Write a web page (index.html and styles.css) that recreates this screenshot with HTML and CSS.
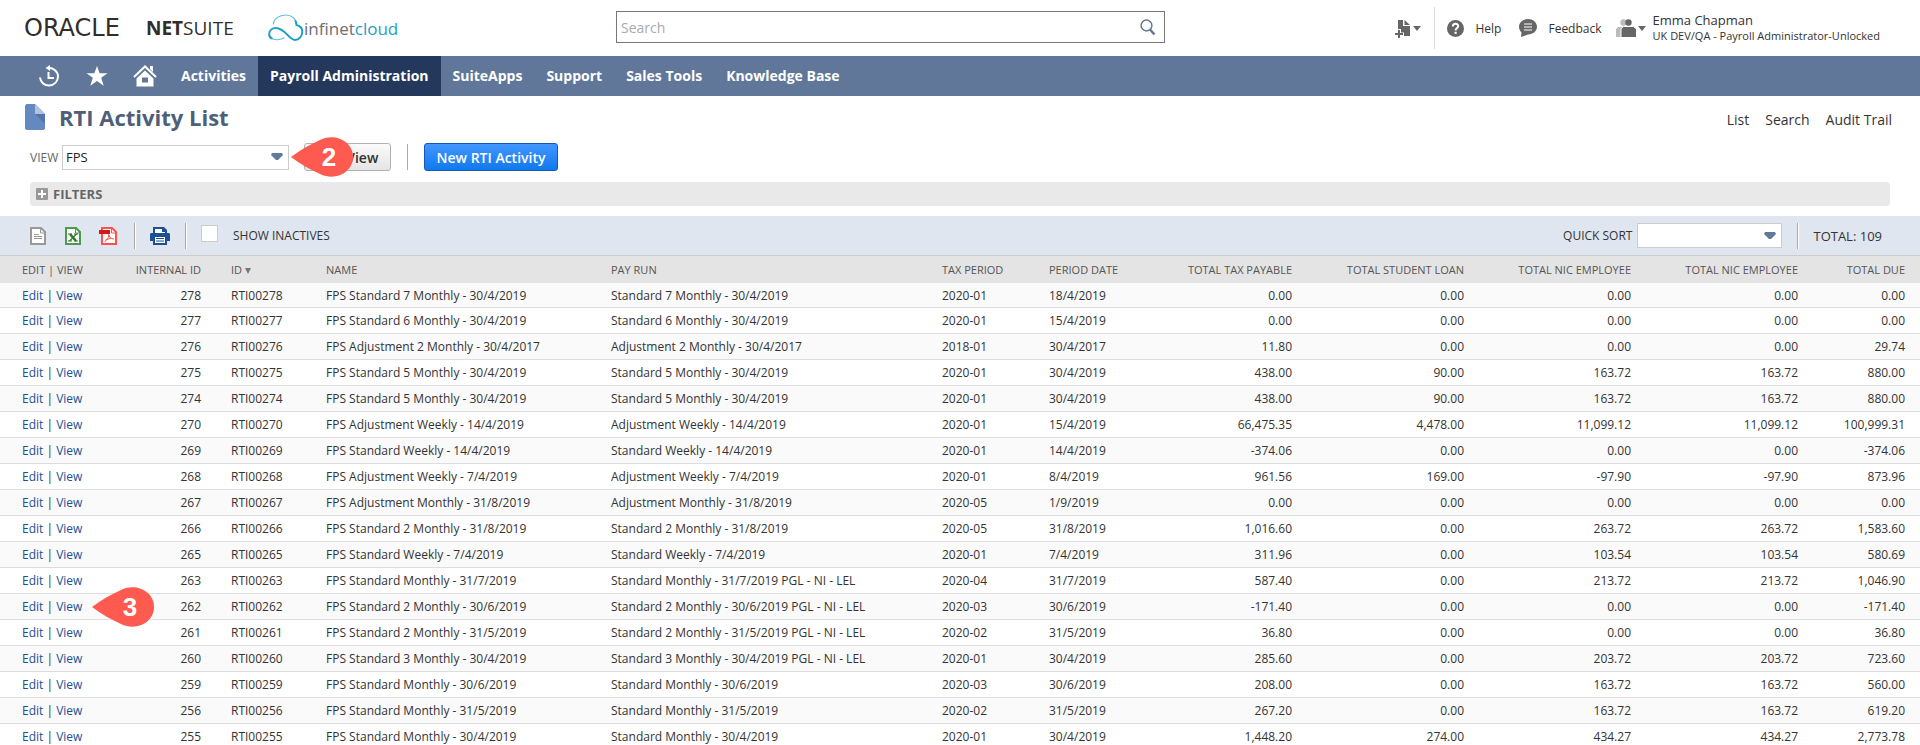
FILE: index.html
```
<!DOCTYPE html>
<html lang="en">
<head>
  <meta charset="UTF-8" />
  <meta name="viewport" content="width=device-width, initial-scale=1.0"/>
  <title>RTI Activity List</title>
<link rel="stylesheet" href="styles.css">
</head>
<body>
  <header class="header">
    <div class="logos">
      <a href="#" class="logo-netsuite"><span class="oracle">ORACLE</span><span class="netsuite"><b>NET</b>SUITE</span></a>
      <a href="#" class="logo-infinet">
        <svg width="36" height="28" viewBox="0 0 36 28" fill="none" stroke-linecap="round">
          <path stroke="#5fc0dc" stroke-width="1.200" d="M5.500 10C5.500 5 11 1 18 1C23.500 1 28 4.500 28.500 10"/>
          <path stroke="#1e9fc6" stroke-width="2" d="M27.500 7C28.300 8.500 28.500 10 28.500 11C32.500 12 34.500 14.500 34.300 18C34 22.500 31 26 27 26C21 26 17 14 8 14C4 14 1.200 16.500 1.200 20C1.200 22 2.500 24 4 24.500"/>
          <path stroke="#5fc0dc" stroke-width="1.200" d="M4 24.500C8 26.500 13 25.500 16 24"/>
        </svg>
        <span class="infinet">infinet<span>cloud</span></span>
      </a>
    </div>
    <form class="search">
      <input type="text" placeholder="Search" aria-label="Search">
      <button type="submit" aria-label="Run search">
        <svg width="16" height="17" viewBox="0 0 16 17" fill="none" stroke="#5f7795"><circle cx="6.500" cy="6.500" r="5.400" stroke-width="1.500"/><path d="M10 10.500l4.500 5" stroke-width="2.400"/></svg>
      </button>
    </form>
    <div class="tools">
      <button class="tool new" aria-label="Create new">
        <svg width="16" height="19" viewBox="0 0 16 19" fill="#666"><path d="M3 1h5v6h7v10H9v-3.500H6V10H3z"/><path d="M9.500 1L15 6H9.500z"/><path d="M3 11h2v3h3v2H5v3H3v-3H0v-2h3z"/></svg>
        <i class="caret"></i>
      </button>
      <a href="#" class="tool help">
        <svg width="17" height="17" viewBox="0 0 17 17"><circle cx="8.500" cy="8.500" r="8.500" fill="#666"/><path d="M5.800 6.500C5.800 3 11.200 3 11.200 6.200C11.200 8 8.600 8.200 8.600 10.500" fill="none" stroke="#fff" stroke-width="2"/><path d="M7.500 11.800h2.200v2H7.500z" fill="#fff"/></svg>
        <span>Help</span>
      </a>
      <a href="#" class="tool feedback">
        <svg width="18" height="18" viewBox="0 0 18 18"><path fill="#666" d="M9 0c5 0 9 3.400 9 7.800s-4 7.700-9 7.700L2 18l.5-4.500C.8 11.800 0 10 0 7.800C0 3.400 4 0 9 0z"/><path d="M5 5h8M5 8h8M5 11h8" stroke="#fff" stroke-width="1.200"/></svg>
        <span>Feedback</span>
      </a>
      <button class="tool role">
        <svg width="20" height="18" viewBox="0 0 20 18"><g fill="#bbb"><circle cx="7.500" cy="3.500" r="3.200"/><path d="M0 18v-8l2-2h5v10z"/></g><path fill="#666" stroke="#fff" d="M5 19V9.500L7.500 7.500h10L20.500 10v9z"/><circle cx="12.500" cy="3.500" r="3.200" fill="#666"/></svg>
        <i class="caret"></i>
        <span class="user">Emma Chapman<small>UK DEV/QA - Payroll Administrator-Unlocked</small></span>
      </button>
    </div>
  </header>

  <nav class="nav">
    <a href="#" class="nav-icon" aria-label="Recent records">
      <svg width="22" height="22" viewBox="0 0 22 22" fill="none" stroke="#fff" stroke-width="2"><path d="M10 3C15.500 2.500 20 6.500 20 11.500C20 16.500 16 20.500 11 20.500C6 20.500 2.500 17 2 12.500"/><path d="M10.500 7v6H16"/><path d="M12 0v6L7.500 3z" fill="#fff" stroke="none"/></svg>
    </a>
    <a href="#" class="nav-icon" aria-label="Shortcuts">
      <svg width="22" height="22" viewBox="0 0 22 22" fill="#fff"><path d="M11 1l2.600 7.200H21.500l-6.300 4.600 2.500 7.900L11 16 4.300 20.700 6.800 12.800.5 8.200h7.900z"/></svg>
    </a>
    <a href="#" class="nav-icon" aria-label="Home">
      <svg width="24" height="22" viewBox="0 0 24 22" fill="#fff"><path d="M1 12L12 1.500 23 12" fill="none" stroke="#fff" stroke-width="2"/><path d="M17 1h3v6l-3-3z"/><path fill-rule="evenodd" d="M12 5.500l8.500 8V21.500h-17v-8zM9 12.500v5h6v-5z"/></svg>
    </a>
    <a href="#">Activities</a>
    <a href="#" class="active">Payroll Administration</a>
    <a href="#">SuiteApps</a>
    <a href="#">Support</a>
    <a href="#">Sales Tools</a>
    <a href="#">Knowledge Base</a>
  </nav>

  <main>
    <div class="title">
      <svg width="20" height="26" viewBox="0 0 20 26"><path fill="#6488c0" d="M1.500 0H10l10 10v14.500L18.500 26h-17L0 24.500v-23z"/><path fill="#b0c2e0" d="M10 0l10 10H10z"/><path fill="#5375aa" d="M10 10h10v9.500z"/></svg>
      <h1>RTI Activity List</h1>
      <div class="title-links">
        <a href="#">List</a>
        <a href="#">Search</a>
        <a href="#">Audit Trail</a>
      </div>
    </div>

    <div class="view-bar">
      <label for="view">VIEW</label>
      <select id="view"><option>FPS</option></select>
      <div class="edit-view">
        <button class="btn">Edit View</button>
        <svg class="marker" width="62" height="40" viewBox="0 0 62 40"><path fill="#ff5a4f" d="M0 20C9 13 20 7 30 2.500C45-4 62 5 62 20S45 44 30 37.500C20 33 9 27 0 20z"/><text x="38" y="29">2</text></svg>
      </div>
      <span class="separator"></span>
      <button class="btn primary">New RTI Activity</button>
    </div>

    <button class="filters">
      <svg width="12" height="12" viewBox="0 0 12 12"><rect width="12" height="12" rx="1" fill="#999"/><path d="M6 2v8M2 6h8" stroke="#fff" stroke-width="2"/></svg>
      FILTERS
    </button>

    <div class="toolbar">
      <button class="export" aria-label="Export CSV">
        <svg width="18" height="18" viewBox="0 0 18 18" fill="none" stroke="#999"><path stroke-width="2" fill="#fff" d="M2 1h10l4 4v12H2z"/><path d="M11.500 1v5H16" /><path d="M5 7.500h5M5 9.500h8M5 11.500h8"/></svg>
      </button>
      <button class="export" aria-label="Export Excel">
        <svg width="18" height="18" viewBox="0 0 18 18" fill="none" stroke="#4c9a4c"><path stroke-width="2" fill="#fff" d="M2 1h10l4 4v12H2z"/><path d="M11.500 1v5H16"/><path stroke="#2d7a2d" stroke-width="2.600" d="M6 7l6 7"/><path stroke="#2d7a2d" stroke-width="1.200" d="M12.500 7l-7 7M4 7h4M10 7h4M4 14h4M10 14h4"/></svg>
      </button>
      <button class="export" aria-label="Export PDF">
        <svg width="19" height="18" viewBox="1 0 19 18" fill="none" stroke="#ff5050"><path stroke-width="2" fill="#fff" d="M4 1h10l4 4v12H4z"/><path d="M13.500 1v5H18"/><path d="M1 3h11v4H1z" fill="#d91515" stroke="none"/><path d="M10.500 7c1 3 2 5 5.500 5M10.800 8c0 3-2 5.500-4.300 6.500M7.500 13c2-1 4-1.500 6-1.500"/></svg>
      </button>
      <span class="separator"></span>
      <button class="export" aria-label="Print">
        <svg width="20" height="18" viewBox="0 0 20 18"><path fill="#1c4f94" d="M3 0h11l3 3v3h2l1 1v7h-3v4H3v-4H0V7l1-1h2z"/><path fill="#fff" d="M5 2h7v3h3v1H5zM5 10h10v6H5z"/><path d="M6 11.500h8M6 14h8" stroke="#1c4f94"/></svg>
      </button>
      <span class="separator"></span>
      <input type="checkbox" id="inactives">
      <label for="inactives">SHOW INACTIVES</label>
      <label for="sort" class="sort-label">QUICK SORT</label>
      <select id="sort"><option></option></select>
      <span class="separator"></span>
      <span class="total">TOTAL: 109</span>
    </div>

    <table class="list">
      <colgroup>
        <col class="c-edit"><col class="c-internal"><col class="c-id"><col class="c-name"><col class="c-run"><col class="c-period"><col class="c-date"><col class="c-tax"><col class="c-loan"><col class="c-nic"><col class="c-nic"><col class="c-due">
      </colgroup>
      <thead>
        <tr>
          <th>EDIT | VIEW</th>
          <th class="num">INTERNAL ID</th>
          <th>ID <i class="sorted"></i></th>
          <th>NAME</th>
          <th>PAY RUN</th>
          <th>TAX PERIOD</th>
          <th>PERIOD DATE</th>
          <th class="num">TOTAL TAX PAYABLE</th>
          <th class="num">TOTAL STUDENT LOAN</th>
          <th class="num">TOTAL NIC EMPLOYEE</th>
          <th class="num">TOTAL NIC EMPLOYEE</th>
          <th class="num">TOTAL DUE</th>
        </tr>
      </thead>
      <tbody id="rows"></tbody>
    </table>
  </main>

  <script src="list.js"></script>
</body>
</html>
```

FILE: styles.css
```
* {
  box-sizing: border-box;
}

body {
  margin: 0;
  font-family: "Open Sans", sans-serif;
  font-size: 12px;
  color: #333;
  background-color: #fff;
  overflow: hidden;
}

a {
  color: inherit;
  text-decoration: none;
}

button, input, select {
  font-family: inherit;
  margin: 0;
}

button {
  padding: 0;
  border: none;
  background: none;
  color: inherit;
  cursor: pointer;
}

svg {
  display: block;
  flex: none;
}

/* header */
.header {
  display: flex;
  align-items: center;
  height: 56px;
  padding: 0 24px;
}

.logos {
  display: flex;
  align-items: center;
  width: 592px;
}

.logo-netsuite {
  display: flex;
  align-items: center;
  width: 244px;
  color: #312d2a;
  line-height: 28px;
}

.oracle {
  width: 122px;
  font-family: "DejaVu Sans", sans-serif;
  font-size: 24px;
}

.netsuite {
  font-size: 19px;
}

.logo-infinet {
  display: flex;
  align-items: center;
}

.infinet {
  font-size: 17px;
  font-weight: 500;
  color: #6d6e71;
}

.infinet span {
  color: #1e9fc6;
}

.search {
  display: flex;
  align-items: center;
  width: 549px;
  height: 32px;
  border: 1px solid #777;
  margin-bottom: 2px;
}

.search input {
  flex: 1;
  border: none;
  outline: none;
  font-size: 14px;
  padding: 0 4px;
}

.search input::placeholder {
  color: #aaa;
}

.search button {
  padding: 0 8px;
}

.tools {
  display: flex;
  align-items: center;
  margin-left: auto;
  margin-right: 16px;
}

.tool {
  display: flex;
  align-items: center;
  font-size: 12px;
}

.caret {
  border: 4px solid transparent;
  border-top: 5px solid #666;
  border-bottom: none;
  margin-left: 2px;
}

.new {
  height: 42px;
  padding-right: 13px;
  border-right: 1px solid #ddd;
}

.help {
  margin-left: 12px;
  gap: 11px;
}

.feedback {
  margin-left: 18px;
  gap: 11px;
}

.role {
  margin-left: 14px;
  text-align: left;
}

.user {
  margin-left: 7px;
  font-size: 13px;
  line-height: 16px;
}

.user small {
  display: block;
  font-size: 11px;
}

/* navigation */
.nav {
  display: flex;
  height: 40px;
  padding-left: 25px;
  background-color: #607799;
  color: #fff;
}

.nav a {
  display: flex;
  align-items: center;
  padding: 0 12px 2px;
  font-size: 14px;
  font-weight: bold;
}

.nav .nav-icon {
  width: 48px;
  padding: 0;
  justify-content: center;
}

.nav .active {
  background-color: #24385b;
}

/* title */
.title {
  display: flex;
  align-items: center;
  height: 42px;
  padding: 0 28px 0 25px;
}

.title h1 {
  margin: 0 0 0 14px;
  font-size: 22px;
  color: #4d5f79;
}

.title-links {
  display: flex;
  gap: 16px;
  margin-left: auto;
  padding-top: 4px;
  font-size: 14px;
}

.view-bar {
  display: flex;
  align-items: center;
  height: 38px;
  padding-left: 30px;
  font-size: 12px;
}

.view-bar label {
  width: 32px;
  color: #666;
}

select {
  appearance: none;
  height: 25px;
  border: 1px solid #ccc;
  border-radius: 0;
  padding: 0 3px;
  color: #222;
  font-size: 13px;
  background: #fff url("data:image/svg+xml,%3Csvg xmlns='http://www.w3.org/2000/svg' width='12' height='8'%3E%3Cpath fill='%235f7a9c' d='M1 0h10l1 2-5 5H5L0 2z'/%3E%3C/svg%3E") no-repeat right 5px center;
}

#view {
  width: 227px;
}

.edit-view {
  position: relative;
  margin-left: 15px;
}

.btn {
  height: 28px;
  width: 87px;
  border: 1px solid #b2b2b2;
  border-radius: 3px;
  background: linear-gradient(#fafafa, #e5e5e5);
  font-size: 14px;
  font-weight: 600;
}

.btn.primary {
  width: 134px;
  border-color: #125ab2;
  background: linear-gradient(#4297ff, #1078ee);
  color: #fff;
}

.marker {
  position: absolute;
  left: -13px;
  top: -6px;
}

.marker text {
  fill: #fff;
  font: bold 26px "Liberation Sans", sans-serif;
  text-anchor: middle;
}

.separator {
  width: 2px;
  height: 26px;
  border-left: 1px solid #aaa;
  border-right: 1px solid #fff;
}

.view-bar .separator {
  margin: 0 15px 0 16px;
}

.filters {
  display: flex;
  align-items: center;
  gap: 5px;
  width: calc(100% - 60px);
  height: 24px;
  margin: 6px 30px 10px;
  padding: 0 6px;
  border-radius: 4px;
  background-color: #e9e9e9;
  color: #666;
  font-size: 13px;
  font-weight: bold;
}

/* list toolbar */
.toolbar {
  display: flex;
  align-items: center;
  height: 40px;
  padding: 0 38px 0 29px;
  border-bottom: 1px solid #ccc;
  background-color: #e0e6ef;
  font-size: 12px;
}

.export {
  width: 35px;
}

.toolbar .separator {
  margin-right: 14px;
}

.toolbar input {
  appearance: none;
  width: 17px;
  height: 17px;
  margin-right: 15px;
  margin-bottom: 4px;
  border: 1px solid #ccc;
  background-color: #fff;
}

.sort-label {
  margin-left: auto;
  margin-right: 5px;
}

#sort {
  width: 145px;
  margin-right: 15px;
}

.total {
  font-size: 13px;
}

/* list */
.list {
  width: 100%;
  table-layout: fixed;
  border-collapse: separate;
  border-spacing: 0;
}

.c-edit { width: 120px; }
.c-internal { width: 96px; }
.c-id { width: 95px; }
.c-name { width: 285px; }
.c-run { width: 331px; }
.c-period { width: 107px; }
.c-date { width: 107px; }
.c-tax { width: 166px; }
.c-loan { width: 172px; }
.c-nic { width: 167px; }
.c-due { width: 107px; }

.list th, .list td {
  height: 26px;
  padding: 0 15px;
  text-align: left;
  white-space: nowrap;
}

.list th {
  height: 27px;
  font-size: 11px;
  font-weight: normal;
  color: #555;
  background-color: #e4e4e4;
}

.list td {
  position: relative;
  border-bottom: 1px solid #ddd;
  font-size: 12px;
}

.list tbody tr:first-child td {
  height: 25px;
}

.list th:first-child, .list td:first-child {
  padding-left: 22px;
}

.list tbody tr:nth-child(odd) {
  background-color: #fafafa;
}

.list .num {
  text-align: right;
}

.list td a {
  color: #1c4f94;
}

.list .marker {
  left: 92px;
  top: -7px;
  z-index: 1;
}

.sorted {
  display: inline-block;
  border: 3px solid transparent;
  border-top: 6px solid #777;
  border-bottom: none;
}
```

FILE: list.js
```
// internal id, name, pay run, tax period, period date, tax, student loan, nic, nic, due
const activities = [
  [278, "FPS Standard 7 Monthly - 30/4/2019", "Standard 7 Monthly - 30/4/2019", "2020-01", "18/4/2019", "0.00", "0.00", "0.00", "0.00", "0.00"],
  [277, "FPS Standard 6 Monthly - 30/4/2019", "Standard 6 Monthly - 30/4/2019", "2020-01", "15/4/2019", "0.00", "0.00", "0.00", "0.00", "0.00"],
  [276, "FPS Adjustment 2 Monthly - 30/4/2017", "Adjustment 2 Monthly - 30/4/2017", "2018-01", "30/4/2017", "11.80", "0.00", "0.00", "0.00", "29.74"],
  [275, "FPS Standard 5 Monthly - 30/4/2019", "Standard 5 Monthly - 30/4/2019", "2020-01", "30/4/2019", "438.00", "90.00", "163.72", "163.72", "880.00"],
  [274, "FPS Standard 5 Monthly - 30/4/2019", "Standard 5 Monthly - 30/4/2019", "2020-01", "30/4/2019", "438.00", "90.00", "163.72", "163.72", "880.00"],
  [270, "FPS Adjustment Weekly - 14/4/2019", "Adjustment Weekly - 14/4/2019", "2020-01", "15/4/2019", "66,475.35", "4,478.00", "11,099.12", "11,099.12", "100,999.31"],
  [269, "FPS Standard Weekly - 14/4/2019", "Standard Weekly - 14/4/2019", "2020-01", "14/4/2019", "-374.06", "0.00", "0.00", "0.00", "-374.06"],
  [268, "FPS Adjustment Weekly - 7/4/2019", "Adjustment Weekly - 7/4/2019", "2020-01", "8/4/2019", "961.56", "169.00", "-97.90", "-97.90", "873.96"],
  [267, "FPS Adjustment Monthly - 31/8/2019", "Adjustment Monthly - 31/8/2019", "2020-05", "1/9/2019", "0.00", "0.00", "0.00", "0.00", "0.00"],
  [266, "FPS Standard 2 Monthly - 31/8/2019", "Standard 2 Monthly - 31/8/2019", "2020-05", "31/8/2019", "1,016.60", "0.00", "263.72", "263.72", "1,583.60"],
  [265, "FPS Standard Weekly - 7/4/2019", "Standard Weekly - 7/4/2019", "2020-01", "7/4/2019", "311.96", "0.00", "103.54", "103.54", "580.69"],
  [263, "FPS Standard Monthly - 31/7/2019", "Standard Monthly - 31/7/2019 PGL - NI - LEL", "2020-04", "31/7/2019", "587.40", "0.00", "213.72", "213.72", "1,046.90"],
  [262, "FPS Standard 2 Monthly - 30/6/2019", "Standard 2 Monthly - 30/6/2019 PGL - NI - LEL", "2020-03", "30/6/2019", "-171.40", "0.00", "0.00", "0.00", "-171.40"],
  [261, "FPS Standard 2 Monthly - 31/5/2019", "Standard 2 Monthly - 31/5/2019 PGL - NI - LEL", "2020-02", "31/5/2019", "36.80", "0.00", "0.00", "0.00", "36.80"],
  [260, "FPS Standard 3 Monthly - 30/4/2019", "Standard 3 Monthly - 30/4/2019 PGL - NI - LEL", "2020-01", "30/4/2019", "285.60", "0.00", "203.72", "203.72", "723.60"],
  [259, "FPS Standard Monthly - 30/6/2019", "Standard Monthly - 30/6/2019", "2020-03", "30/6/2019", "208.00", "0.00", "163.72", "163.72", "560.00"],
  [256, "FPS Standard Monthly - 31/5/2019", "Standard Monthly - 31/5/2019", "2020-02", "31/5/2019", "267.20", "0.00", "163.72", "163.72", "619.20"],
  [255, "FPS Standard Monthly - 30/4/2019", "Standard Monthly - 30/4/2019", "2020-01", "30/4/2019", "1,448.20", "274.00", "434.27", "434.27", "2,773.78"]
];

const marker = `<svg class="marker" width="62" height="40" viewBox="0 0 62 40"><path fill="#ff5a4f" d="M0 20C9 13 20 7 30 2.500C45-4 62 5 62 20S45 44 30 37.500C20 33 9 27 0 20z"/><text x="38" y="29">3</text></svg>`;

const rows = document.getElementById("rows");

activities.forEach(([id, name, run, period, date, ...amounts]) => {
  const row = document.createElement("tr");
  row.innerHTML = `
    <td><a href="#">Edit</a> | <a href="#">View</a>${id === 262 ? marker : ""}</td>
    <td class="num">${id}</td>
    <td>RTI00${id}</td>
    <td>${name}</td>
    <td>${run}</td>
    <td>${period}</td>
    <td>${date}</td>
    ${amounts.map(amount => `<td class="num">${amount}</td>`).join("")}`;
  rows.appendChild(row);
});
```
